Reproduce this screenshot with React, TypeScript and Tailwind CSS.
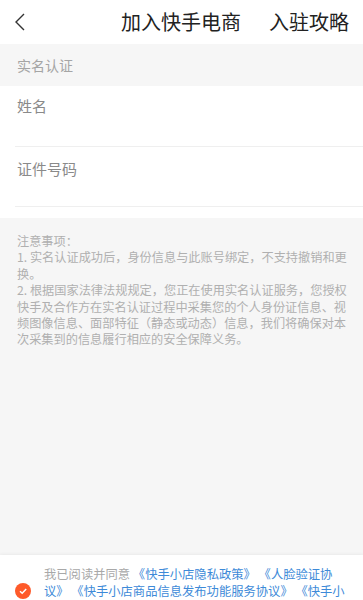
import { useState } from 'react'

const font = { fontFamily: '"Noto Sans CJK SC", "Noto Sans", sans-serif' }

const notice = [
  '注意事项：',
  '1. 实名认证成功后，身份信息与此账号绑定，不支持撤销和更',
  '换。',
  '2. 根据国家法律法规规定，您正在使用实名认证服务，您授权',
  '快手及合作方在实名认证过程中采集您的个人身份证信息、视',
  '频图像信息、面部特征（静态或动态）信息，我们将确保对本',
  '次采集到的信息履行相应的安全保障义务。',
]

export default function App() {
  const [agreed, setAgreed] = useState(true)

  return (
    <div className="w-[363px] h-[600px] flex flex-col bg-[#f6f6f6] overflow-hidden" style={font}>
      {/* 顶部导航 */}
      <div className="h-[44px] shrink-0 bg-white flex items-center pl-[13px] pr-[14px]">
        <svg width="14" height="20" viewBox="0 0 14 20" className="mr-auto">
          <path d="M11 2 L3 10 L11 18" fill="none" stroke="#333" strokeWidth="1.4" />
        </svg>
        <span className="text-[20px] text-[#222] leading-none">加入快手电商</span>
        <span className="ml-[28px] text-[20px] text-[#222] leading-none">入驻攻略</span>
      </div>

      <div className="h-[42px] shrink-0 flex items-center px-[17px] text-[14px] text-[#a5a5a5]">
        实名认证
      </div>

      {/* 表单 */}
      <div className="bg-white shrink-0">
        <div className="ml-[15px] h-[61px] border-b border-[#efefef] flex items-start pt-[9px] pl-[2px]">
          <span className="text-[15px] text-[#8a8a8a]">姓名</span>
        </div>
        <div className="ml-[15px] h-[60px] border-b border-[#efefef] flex items-start pt-[11px] pl-[2px]">
          <span className="text-[15px] text-[#8a8a8a]">证件号码</span>
        </div>
        <div className="h-[11px]" />
      </div>

      {/* 注意事项 */}
      <div className="flex-1 flex flex-col pl-[17px] pr-[8px] pt-[15px] text-[12.2px] leading-[16.4px] text-[#b0b0b0]">
        {notice.map((line, i) => (
          <span key={i} className="block whitespace-nowrap">
            {line}
          </span>
        ))}
      </div>

      {/* 协议 */}
      <div className="h-[45px] shrink-0 bg-white shadow-[0_-1px_3px_rgba(0,0,0,0.05)] flex items-start pt-[11px] pl-[15px] pr-[8px]">
        <button
          onClick={() => setAgreed(!agreed)}
          className={`mt-[17px] w-[16px] h-[16px] shrink-0 rounded-full flex items-center justify-center ${agreed ? 'bg-[#fe5a2a]' : 'border border-[#ccc]'}`}
        >
          {agreed && (
            <svg width="10" height="10" viewBox="0 0 10 10">
              <path d="M2 5.2 L4.2 7.3 L8.2 3" fill="none" stroke="#fff" strokeWidth="1.5" />
            </svg>
          )}
        </button>
        <p className="ml-[13px] text-[12.3px] leading-[16.5px] text-[#a8a8a8]">
          我已阅读并同意{' '}
          <span className="text-[#3d8ad8]">
            《快手小店隐私政策》 《人脸验证协
            <br />
            议》 《快手小店商品信息发布功能服务协议》 《快手小店开店服务协议》
          </span>
        </p>
      </div>
    </div>
  )
}
